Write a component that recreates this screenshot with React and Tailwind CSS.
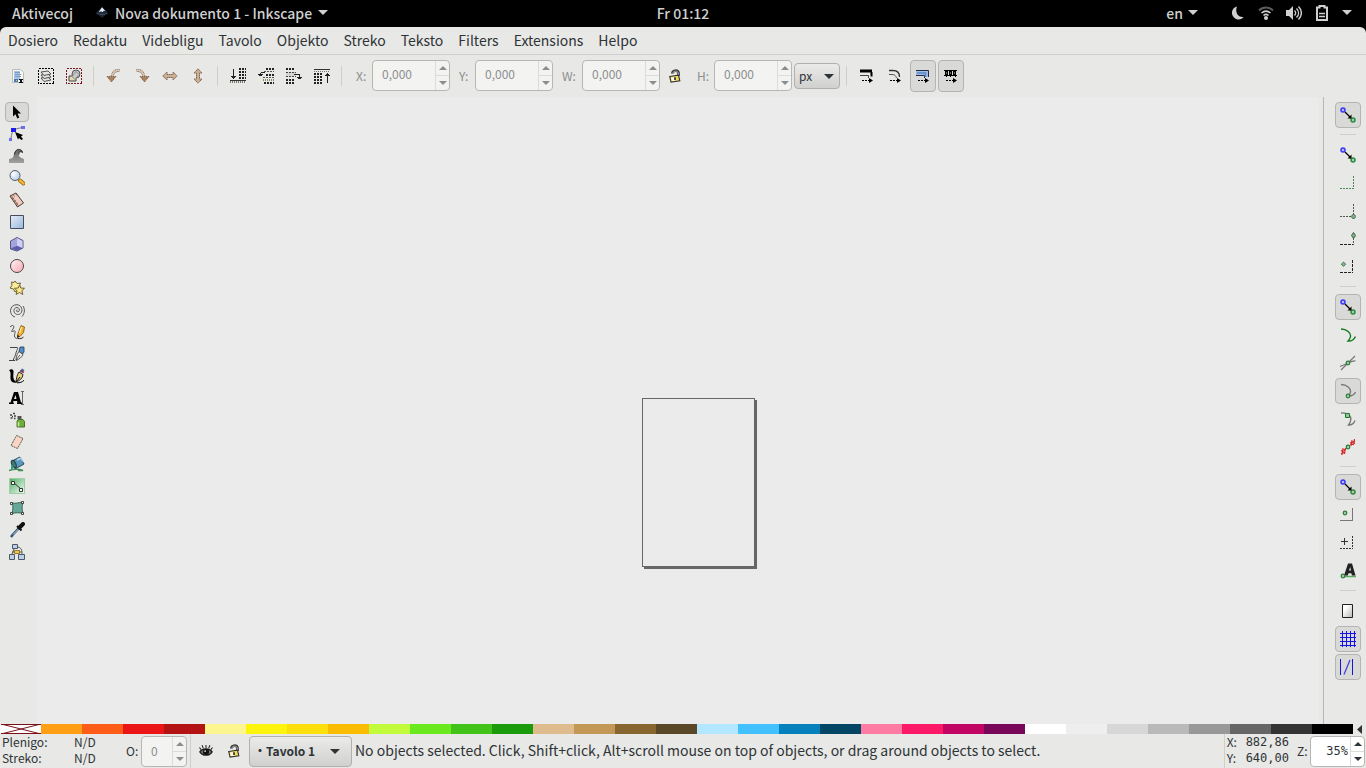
import { useState } from 'react';
import clsx from 'clsx';

const FONT = "font-['Noto_Sans_CJK_SC','Open_Sans',sans-serif]";
const MONO = "font-['DejaVu_Sans_Mono',monospace]";

const menus = ['Dosiero', 'Redaktu', 'Videbligu', 'Tavolo', 'Objekto', 'Streko', 'Teksto', 'Filters', 'Extensions', 'Helpo'];

const palette = [
  '#ff9f15', '#fe5d17', '#eb1515', '#b41313',
  '#fcf590', '#fdf40d', '#fde00b', '#fabc02',
  '#c2fb3c', '#69e91e', '#41c318', '#1b9a0b',
  '#debc8d', '#c39756', '#87672f', '#5b4829',
  '#b3e7ff', '#43c1ff', '#0480bc', '#034564',
  '#fe7ba3', '#fc1967', '#c10562', '#780659',
  '#ffffff', '#eeeeee', '#d7d7d7', '#b9b9b9', '#989898', '#666666', '#333333', '#000000',
];

function Svg({ children, ...rest }) {
  return (
    <svg width="16" height="16" viewBox="0 0 16 16" fill="none" className="shrink-0" aria-hidden="true" {...rest}>
      {children}
    </svg>
  );
}

function Caret({ up, className = 'fill-[#2e3436]', w = 10 }) {
  return (
    <svg width={w} height={w / 2} viewBox="0 0 10 5" className={clsx('shrink-0', className)} aria-hidden="true">
      <path d={up ? 'M0 5L5 0l5 5z' : 'M0 0h10L5 5z'} />
    </svg>
  );
}

/* ===== command bar icons ===== */

const selectAll = (
  <Svg>
    <path d="M2.500 1.500h8l3 3v10h-11z" fill="#f6f6f4" stroke="#bcbcb8" />
    <path d="M4 3h6v9H4z" fill="#a9c3e4" />
    <path d="M5 4.500h5M5 6.500h6M5 8.500h6" stroke="#7c9cc8" shapeRendering="crispEdges" />
    <path d="M4 11h4v3H4z" fill="#4479b4" />
    <path d="M6 12h1v1H6z" fill="#e8d060" />
    <path d="M9 11h4v1h-1v2h1v1H9v-1h1v-2H9z" fill="#111" />
  </Svg>
);
const selectLayers = (
  <Svg>
    <path d="M.5.5h15v15H.5z" stroke="#000" strokeDasharray="2 1" shapeRendering="crispEdges" />
    <g fill="#e4e4e2" stroke="#444" strokeWidth=".9">
      <path d="M3 10l7-1 3 3-7 1.500z" />
      <path d="M3 7l7-1 3 3-7 1.500z" />
      <path d="M3 4l7-1 3 3-7 1.500z" />
    </g>
  </Svg>
);
const deselect = (
  <Svg>
    <path d="M.5.5h15v15H.5z" stroke="#7d1620" strokeDasharray="2 1" shapeRendering="crispEdges" />
    <path d="M3 8h7v5H3z" fill="#dcdcb0" stroke="#444" />
    <circle cx="10" cy="6" r="4" fill="#bfc6d0" stroke="#555" />
    <path d="M10 3.500l3 3-4 5-3-3z" fill="#c9c9c9" stroke="#777" strokeWidth=".7" />
  </Svg>
);
const rotateCcw = (
  <Svg>
    <path d="M13.500 2.500C8.500 2 6.500 5 6 9" stroke="#8d7058" strokeWidth="3" strokeDasharray="1 .6" />
    <path d="M13.500 2.500C8.500 2 6.500 5 6 9" stroke="#e8d6c4" strokeWidth="1" />
    <path d="M1 8.500h9L5.500 14z" fill="#a9825f" stroke="#7d5a3e" strokeWidth=".8" strokeDasharray="1.500 .5" />
  </Svg>
);
const rotateCw = (
  <Svg>
    <path d="M2.500 2.500C7.500 2 9.500 5 10 9" stroke="#8d7058" strokeWidth="3" strokeDasharray="1 .6" />
    <path d="M2.500 2.500C7.500 2 9.500 5 10 9" stroke="#e8d6c4" strokeWidth="1" />
    <path d="M15 8.500H6L10.500 14z" fill="#a9825f" stroke="#7d5a3e" strokeWidth=".8" strokeDasharray="1.500 .5" />
  </Svg>
);
const flipH = (
  <Svg>
    <path d="M.8 8L5 4v2.500h6V4l4.200 4L11 12V9.500H5V12z" fill="#cbb096" stroke="#7d6450" strokeDasharray="1.500 .5" />
  </Svg>
);
const flipV = (
  <Svg>
    <path d="M8 .8L12 5H9.500v6H12l-4 4.200L4 11h2.500V5H4z" fill="#cbb096" stroke="#7d6450" strokeDasharray="1.500 .5" />
  </Svg>
);
const lowerBottom = (
  <Svg shapeRendering="crispEdges">
    <path d="M3.500 1v9" stroke="#222" />
    <path d="M1 8h5v1H5v1H4v1H3v-1H2V9H1z" fill="#222" />
    <path d="M9 1h7M9 4h7M9 7h7M9 10h7" stroke="#222" strokeWidth="2" strokeDasharray="2 1" />
    <path d="M0 14h16" stroke="#77776a" strokeWidth="2" strokeDasharray="1 1" />
    <path d="M0 12.500h16" stroke="#333" />
  </Svg>
);
const lower = (
  <Svg shapeRendering="crispEdges">
    <path d="M8 1h8M8 7h8M6 15h10" stroke="#222" strokeWidth="2" strokeDasharray="2 1" />
    <path d="M6 3.500h10M5 9.500h11" stroke="#555" strokeDasharray="2 1" />
    <path d="M5 12h11" stroke="#888866" strokeWidth="2" strokeDasharray="1 1" />
    <path d="M3 4.500h4M2.500 5v3" stroke="#222" />
    <path d="M0 6h5v1H4v1H1V7H0z" fill="#222" />
  </Svg>
);
const raise = (
  <Svg shapeRendering="crispEdges">
    <path d="M0 1h9M0 12h8M0 15h9" stroke="#222" strokeWidth="2" strokeDasharray="2 1" />
    <path d="M0 4h10v4H0z" fill="#d4d4d0" />
    <path d="M0 4.500h10M0 8.500h10" stroke="#444" strokeDasharray="2 1" />
    <path d="M8 6.500h6M13.500 7v3" stroke="#222" />
    <path d="M11 9h5v1h-1v1h-3v-1h-1z" fill="#222" />
  </Svg>
);
const raiseTop = (
  <Svg shapeRendering="crispEdges">
    <path d="M0 1.500h16" stroke="#333" />
    <path d="M0 3.500h16" stroke="#77776a" strokeDasharray="1 1" />
    <path d="M0 6h8M0 9h8M0 12h8M0 15h8" stroke="#222" strokeWidth="2" strokeDasharray="2 1" />
    <path d="M13.500 6v9" stroke="#222" />
    <path d="M11 8V7h1V6h1V5h1v1h1v1h1v1z" fill="#222" />
  </Svg>
);

const dottedArrow = (
  <>
    <path d="M3 12.500h7" stroke="#000" strokeDasharray="2 1" shapeRendering="crispEdges" />
    <path d="M10 10l4 2.500-4 2.500z" fill="#000" />
  </>
);
const scaleStroke = (
  <Svg>
    <path d="M1 3h12" stroke="#000" strokeWidth="3" />
    <path d="M12.500 4v4.500" stroke="#000" strokeWidth="2" />
    <path d="M1 7.500h8.500V10" stroke="#444" />
    {dottedArrow}
  </Svg>
);
const scaleCorners = (
  <Svg>
    <path d="M2 2.500h4c4 0 6.500 2.500 6.500 6.500" stroke="#333" strokeWidth="1.300" />
    <path d="M2 6.500h3c3 0 4 1.500 4.500 3.500" stroke="#555" />
    {dottedArrow}
  </Svg>
);
const scaleGradient = (
  <Svg>
    <path d="M1 2.500h12.500V9h-4V7.500H1z" fill="#9dbce6" />
    <path d="M1 2.500h12.500V9M1 7.500h8.500V10" stroke="#1d2c44" />
    <path d="M2 5h8.500v4" stroke="#5c86c4" strokeWidth="1.500" />
    {dottedArrow}
  </Svg>
);
const scalePattern = (
  <Svg>
    <path d="M1 2.500h13M1 7.500h13" stroke="#000" />
    <path d="M2 5h12" stroke="#000" strokeWidth="4" strokeDasharray="3 1" />
    <path d="M3 5h11" stroke="#ddd" strokeDasharray="1 3" />
    <path d="M3.500 8v1M7.500 8v1M12.500 8v1" stroke="#000" />
    {dottedArrow}
  </Svg>
);

const commandGroups = [
  [['Select all', selectAll], ['Select all in all layers', selectLayers], ['Deselect', deselect]],
  [['Rotate left', rotateCcw], ['Rotate right', rotateCw], ['Flip horizontally', flipH], ['Flip vertically', flipV]],
  [['Lower to bottom', lowerBottom], ['Lower', lower], ['Raise', raise], ['Raise to top', raiseTop]],
];

/* ===== toolbox ===== */

const tools = [
  ['Selector', <Svg><path d="M4 1.500v11l2.500-2.300 1.800 4.300 2-.9-1.800-4.100H12z" fill="#000" /></Svg>],
  ['Node', (
    <Svg>
      <path d="M2 13C2.500 8 3 5 6 3.500S12 2 14 1.500" stroke="#777" />
      <path d="M2 2h5v4H2z" fill="#1e1ee6" />
      <path d="M12 0h4v3h-4zM0 12h3v3H0z" fill="#6a6af2" />
      <path d="M6 6l8 3-2 1.500 2 2.500-1.500 1-2.500-2-1 1.500z" fill="#000" />
    </Svg>
  )],
  ['Tweak', (
    <Svg>
      <defs><linearGradient id="tw" x1="0" y1="0" x2="0" y2="1"><stop stopColor="#666" /><stop offset="1" stopColor="#a2a2a2" /></linearGradient></defs>
      <path d="M0 15v-4c4-.5 4.500-2 5-5C5.500 3 8 1 10.500 1.500c2 .5 3 1.500 3 3-1-.8-2-1-2.800-.6-1.700.8-1.200 4.600.8 5.600 1 .8 3.500 1 3.500 2V15z" fill="url(#tw)" />
      <path d="M5.500 6.500C6 3 8 1 10.500 1.500c2 .5 3 1.500 3 3-1-.8-2-1-2.800-.6-.8.4-1 1.400-.8 2.600" stroke="#222" />
    </Svg>
  )],
  ['Zoom', (
    <Svg>
      <defs><radialGradient id="zm" cx=".35" cy=".35" r=".7"><stop stopColor="#fff" /><stop offset="1" stopColor="#b4cdec" /></radialGradient></defs>
      <path d="M11 10.500l3.500 3" stroke="#8a5d10" strokeWidth="4" strokeLinecap="round" />
      <path d="M11 10.500l3.500 3" stroke="#f5b432" strokeWidth="2.500" strokeLinecap="round" />
      <circle cx="6" cy="5.500" r="5" fill="url(#zm)" stroke="#555c66" />
    </Svg>
  )],
  ['Measure', (
    <Svg>
      <path d="M1 4l6-3 7.500 10-6 4z" fill="#f1cdbf" stroke="#4d3a35" />
      <path d="M2.500 4l7 10M3 7l2-1M5 9.500l2-1M7 12l2-1M4.500 3l1 1.500M7 2l1 1.500" stroke="#7a5a50" strokeWidth=".8" />
    </Svg>
  )],
  ['Rectangle', (
    <Svg>
      <defs><linearGradient id="rc" x1="0" y1="0" x2="1" y2="1"><stop stopColor="#e6eefa" /><stop offset="1" stopColor="#98b6dc" /></linearGradient></defs>
      <path d="M1.500 1.500h13v13h-13z" fill="url(#rc)" stroke="#454f5c" />
    </Svg>
  )],
  ['3D box', (
    <Svg>
      <path d="M1.500 5L8 1.500l6 3v7.500l-6 3-6.500-2z" fill="#8c8cd0" stroke="#55557e" />
      <path d="M8 2v8l5.500 2V5z" fill="#d0d0f6" />
      <path d="M2 12.300l6-2.600 5.500 2.500L8 14.500z" fill="#5c5cae" />
      <path d="M2 5.300L8 2v7.700L2 12z" fill="#a4a4dc" />
    </Svg>
  )],
  ['Ellipse', (
    <Svg>
      <defs><linearGradient id="el" x1="0" y1="0" x2="1" y2="1"><stop stopColor="#fff2f3" /><stop offset="1" stopColor="#fba9b6" /></linearGradient></defs>
      <circle cx="8" cy="8" r="6.500" fill="url(#el)" stroke="#4e4446" />
    </Svg>
  )],
  ['Star', (
    <Svg>
      <path d="M6 1l2 2.500 3.500-.5-1 3 2 3-4 1L6 12 4.500 9 1 8l2-2.500-.5-3.500 2.500.500z" fill="#f9eca0" stroke="#6f6430" />
      <path d="M10.500 5l1.300 3 3.700.3-2.600 2.400.9 3.800-3.300-2-3.400 2 .9-3.800L5.500 8.300l3.700-.3z" fill="#fbe88a" stroke="#6f6430" />
    </Svg>
  )],
  ['Spiral', (
    <Svg>
      <path d="M8.500 8C7 7.500 7 10 8.800 9.800c2.500-.3 2-4.300-.8-4.300-4 0-4.300 6.500.5 7 6 .5 6-9.500-.5-9.800C0 2.500-.5 13.500 6 15M14 4c2 3 2 7-1 10.500" stroke="#555" />
    </Svg>
  )],
  ['Pencil', (
    <Svg>
      <path d="M1 3c3-3 5-1 3 2s-2 3 1 2-1 5 1 6.500 2 1 3 1" stroke="#555" />
      <path d="M12 1.500L15.500 3l-1 5.500-3.500 4-2.500 1 .5-4z" fill="#f6b32c" stroke="#7a5110" strokeWidth=".8" />
      <path d="M8.500 10.500l2 2-2.500 1.500z" fill="#222" />
      <path d="M12.500 3l-2 6" stroke="#fde7a8" strokeWidth="1.200" />
      <path d="M9 14.500c2 .5 4 0 5.500-1.500" stroke="#222" />
    </Svg>
  )],
  ['Bezier', (
    <Svg>
      <path d="M1 1.500h7c2 0-1 4-1.500 7S4 12.500 4.500 14M0 14.500h6" stroke="#444" />
      <path d="M11 1h4v5l-1.500 2L10 6z" fill="#4a90cc" stroke="#26384a" strokeWidth=".8" />
      <path d="M10 5.500l4 3c-1.500 3-3.500 4.500-7 6C7 11 8 8 10 5.500z" fill="#ededea" stroke="#333" strokeWidth=".8" />
      <path d="M7 14l4-5" stroke="#333" strokeWidth=".8" />
    </Svg>
  )],
  ['Calligraphy', (
    <Svg>
      <path d="M0 2c3-1.500 5-1 4.500 3S4 12 8 14.500C3 15.500 1 13 1.500 8 1.800 5 1.500 3.500 0 2z" fill="#000" />
      <path d="M13 .5l2.500 1.500-2 3-3-1.500z" fill="#3f6fb0" />
      <path d="M11.500 2.500l3.500 2" stroke="#b02020" strokeWidth="1.300" />
      <path d="M10 4l4 2.500c-.5 4-3 6-7 7.500.5-4 1-7 3-10z" fill="#e9d27c" stroke="#222" />
      <path d="M7 14l4-5M8 14.800c3 0 5-.5 7-2.500" stroke="#000" />
    </Svg>
  )],
  ['Text', (
    <Svg>
      <path d="M0 12.500h1.500L5 2h4l3 10.500h1V14H8v-1.500h.5L8 11H4.500L4 12.500h.8V14H0zM5 9h2.500L6.500 5z" fill="#000" fillRule="evenodd" />
      <path d="M12 1.500h3M12 14.500h3M13.500 2v12" stroke="#666" />
    </Svg>
  )],
  ['Spray', (
    <Svg>
      <path d="M9 7.500h5l1.500 2V15H8V9.500z" fill="#6cae36" stroke="#35561c" strokeWidth=".8" />
      <path d="M9.500 10v4.500" stroke="#c8ec9a" strokeWidth="1.500" />
      <path d="M8.500 4h4v3h-4z" fill="#555" />
      <path d="M1 3h2M4 1.500h2M5 4h2M1.500 6h2M5 6.500h1.500M3 4.500h1" stroke="#444" strokeWidth="1.300" />
    </Svg>
  )],
  ['Eraser', (
    <Svg>
      <path d="M7.500 1.500l6.500 3-5.500 10-6.500-3z" fill="#fad5c7" stroke="#554" strokeWidth=".9" strokeDasharray="2 .6" />
    </Svg>
  )],
  ['Bucket', (
    <Svg>
      <path d="M0 14.500c4-1.500 10-1.500 14 0H9" stroke="#3e8f50" strokeWidth="1.500" />
      <path d="M3 5l8-4 4 7-8 4.500C4 12 2.500 8 3 5z" fill="#5b9ac0" stroke="#27455a" />
      <ellipse cx="4.800" cy="8" rx="2" ry="4" transform="rotate(-25 4.800 8)" fill="#3c7a70" stroke="#223b44" />
      <path d="M8 4l4-2 2 3.500" stroke="#b7d8ea" strokeWidth="1.500" />
      <path d="M3 9v5" stroke="#3a9a80" strokeWidth="2" />
    </Svg>
  )],
  ['Gradient', (
    <Svg>
      <defs><linearGradient id="gd" x1="0" y1="0" x2="1" y2="1"><stop stopColor="#4fae62" /><stop offset="1" stopColor="#f4fcf5" /></linearGradient></defs>
      <path d="M.5.500h15v15H.5z" fill="url(#gd)" stroke="#9ccfa6" />
      <path d="M5 5l7 6" stroke="#333" />
      <path d="M2.500 3.500h3v3h-3zM10.500 10.500h3v3h-3z" fill="#fff" stroke="#333" />
    </Svg>
  )],
  ['Mesh', (
    <Svg>
      <path d="M3 3c4 1 7-1 11-.5-1.500 4-1 7 0 11-4-1-7-1-11 0 1-4 1.500-7 0-10.500z" fill="#67a79a" stroke="#37645c" />
      <path d="M1.500 2.500h2v2h-2zM12.500 1.500h2v2h-2zM1.500 12.500h2v2h-2zM12.500 12.500h2v2h-2z" fill="#fff" stroke="#333" strokeWidth=".9" />
    </Svg>
  )],
  ['Dropper', (
    <Svg>
      <path d="M10.500 5.500L3.500 13l-1.500 2" stroke="#31536e" strokeWidth="2.500" />
      <path d="M10 6.500L4 12.500" stroke="#b8d4ea" />
      <path d="M8 4l4.500 4.500" stroke="#111" strokeWidth="2" />
      <path d="M10.500 5.500L14 2" stroke="#111" strokeWidth="4" strokeLinecap="round" />
    </Svg>
  )],
  ['Connector', (
    <Svg>
      <path d="M5 5L3 10M9 3c4 1 4 4 4 7M3 8h10" stroke="#555" />
      <path d="M3.500.500h5v4h-5zM.5 10.500h5v5h-5zM9.500 10.500h6v5h-6z" fill="#bcd0ea" stroke="#4e5864" />
      <path d="M5.500 6.500h5v3h-5z" fill="#f6c44a" stroke="#7a6420" strokeWidth=".8" />
    </Svg>
  )],
];

/* ===== snap bar ===== */

const snapIcon = (
  <Svg>
    <circle cx="3" cy="3" r="2" fill="#b4b4f8" stroke="#3a3af0" strokeWidth="1.500" />
    <circle cx="13" cy="13" r="2" fill="#a9c8c0" stroke="#2f8a3a" strokeWidth="1.500" />
    <path d="M5 5l5 5" stroke="#000" strokeWidth="1.200" />
    <path d="M11.500 7.500v4h-4z" fill="#000" />
  </Svg>
);
const greenDot = (cx, cy) => <circle cx={cx} cy={cy} r="1.800" fill="#9ccfa4" stroke="#2f7a3a" strokeWidth="1.200" />;

const snapGroups = [
  [['Enable snapping', snapIcon, true]],
  [
    ['Snap bounding boxes', snapIcon],
    ['Snap to box edges', <Svg><path d="M0 13.500h14M13.500 1v13" stroke="#4c8a54" strokeDasharray="2 1" shapeRendering="crispEdges" /></Svg>],
    ['Snap box corners', <Svg><path d="M0 13.500h11M13.500 1v10" stroke="#555" strokeDasharray="2 1" shapeRendering="crispEdges" /><path d="M13.500 11l2.500 2.500-2.500 2.500-2.500-2.500z" fill="#7fb488" stroke="#3c5c40" /></Svg>],
    ['Snap edge midpoints', <Svg><path d="M0 13.500h14" stroke="#222" strokeDasharray="3 1" shapeRendering="crispEdges" /><path d="M13.500 7v7" stroke="#555" strokeDasharray="2 1" /><path d="M13.500 1.500l2 3-2 3-2-3z" fill="#7fb488" stroke="#3c5c40" /></Svg>],
    ['Snap box centers', <Svg><path d="M0 13.500h13M12.500 1v13" stroke="#222" strokeDasharray="3 1" shapeRendering="crispEdges" /><path d="M3.500 3l2.200 2.200-2.200 2.200-2.200-2.200z" fill="#7fb488" stroke="#4a7a50" /></Svg>],
  ],
  [
    ['Snap nodes', snapIcon, true],
    ['Snap to paths', <Svg><path d="M1 2c6 0 10 4 9.500 7.500-.3 2-1.500 3.500-2.500 4.500 4 .500 6-1.500 7.500-4.500" stroke="#0d7a1c" strokeWidth="1.400" /></Svg>],
    ['Snap path intersections', <Svg><path d="M1 15L15 1M0 11.500C5 10 11 5.500 15.500 6" stroke="#777" strokeWidth="1.200" />{greenDot(8, 8)}</Svg>],
    ['Snap cusp nodes', <Svg><path d="M1 1.500c6 0 10 4 9.500 7.500-.3 1.500-1 3-2 4 4 0 6-1.500 7-4" stroke="#777" strokeWidth="1.300" />{greenDot(8, 13)}</Svg>, true],
    ['Snap smooth nodes', <Svg><path d="M1 2c8-.5 11 4 9.500 8-.4 1.500-1.200 3-2 4 4 0 5.500-1.500 6.500-4.500" stroke="#777" strokeWidth="1.300" /><path d="M5.500 2.500h4v4h-4z" fill="#8cc896" stroke="#1d7a2c" /></Svg>],
    ['Snap line midpoints', <Svg><path d="M1 15L15 1" stroke="#888" /><path d="M1 12l5-2M1 15l4-2M3 9l-1 7M5.500 9l-1 6M10 4l5-2M11 6l4-2M12 1l-1 6M14.500 0l-1 6" stroke="#d22" strokeWidth="1.100" />{greenDot(8, 8)}</Svg>],
  ],
  [
    ['Snap other points', snapIcon, true],
    ['Snap object centers', <Svg><path d="M0 13.500h13M12.500 1v13" stroke="#777" shapeRendering="crispEdges" />{greenDot(5, 6)}</Svg>],
    ['Snap rotation centers', <Svg><path d="M0 13.500h13M12.500 1v13" stroke="#333" strokeDasharray="2 1" shapeRendering="crispEdges" /><path d="M4.500 3v7M1 6.500h7" stroke="#333" shapeRendering="crispEdges" /></Svg>],
    ['Snap text baselines', (
      <Svg>
        <path d="M3 13.500h13" stroke="#5aa864" strokeWidth="1.500" />
        <path d="M4 12.500L8 .500h4l3.500 12H12l-.7-2.300H8.500l-.7 2.300zM9 7.500h2L10.200 4z" fill="#222" fillRule="evenodd" />
        {greenDot(3, 13)}
      </Svg>
    )],
  ],
  [
    ['Snap page border', (
      <Svg>
        <defs><linearGradient id="pg" x1="0" y1="0" x2="1" y2="1"><stop offset=".3" stopColor="#fff" /><stop offset="1" stopColor="#b4b4b4" /></linearGradient></defs>
        <path d="M2.500 1.500h10v13h-10z" fill="url(#pg)" stroke="#222" />
      </Svg>
    )],
    ['Snap to grids', <Svg><path d="M2.500 0v16M6.500 0v16M10.500 0v16M14.500 0v16M0 2.500h16M0 6.500h16M0 10.500h16M0 14.500h16" stroke="#1414e0" shapeRendering="crispEdges" /></Svg>, true],
    ['Snap guides', <Svg><path d="M.5 0v16M12.500 0v16" stroke="#1414e0" shapeRendering="crispEdges" /><path d="M4 15.500L10 1" stroke="#3a3ae0" strokeWidth="1.200" /></Svg>, true],
  ],
];

const lockIcon = (
  <Svg width="14" height="14">
    <path d="M5 5C5 1.500 11 .5 12 4.500V8" stroke="#333" strokeWidth="3" />
    <path d="M5.500 4.500C6 2 11 1.500 11.800 4.500V8" stroke="#ccc" strokeWidth="1" />
    <path d="M2 8.500l10-1.500 1.500 6.500-10 1.500z" fill="#f4dc5c" stroke="#333" strokeWidth="1.300" />
    <path d="M3.500 10l4.500-.6.8 3.600-4.500.6z" fill="#fffbe8" />
    <path d="M7 9.500h2v3H7z" fill="#333" />
  </Svg>
);

function IconButton({ label, pressed, disabled, className = 'w-[26px] h-[26px]', children, onClick }) {
  return (
    <button
      type="button"
      aria-label={label}
      aria-pressed={pressed}
      disabled={disabled}
      onClick={onClick}
      className={clsx(
        'flex shrink-0 items-center justify-center rounded border',
        pressed ? 'border-[#b4b4b1] bg-[#d9d9d7]' : 'border-transparent',
        className,
      )}
    >
      {children}
    </button>
  );
}

function Spin({ id, value, disabled, className, inputClass }) {
  const arrow = disabled ? 'fill-[#8b8e8f]' : 'fill-[#2e3436]';
  return (
    <div className={clsx('flex h-[31px] shrink-0 overflow-hidden rounded border border-[#b6b6b2]', disabled ? 'bg-[#f3f3f2]' : 'bg-white', className)}>
      <input
        id={id}
        defaultValue={value}
        disabled={disabled}
        className={clsx('min-w-0 flex-1 bg-transparent outline-none', disabled ? 'text-[#8b8e8f]' : 'text-[#2e3436]', inputClass)}
      />
      <div className="flex w-[14px] shrink-0 flex-col border-l border-[#dcdcda]">
        <button type="button" aria-label="Increase" disabled={disabled} className="flex flex-1 items-center justify-center border-b border-[#dcdcda]">
          <Caret up w={8} className={arrow} />
        </button>
        <button type="button" aria-label="Decrease" disabled={disabled} className="flex flex-1 items-center justify-center">
          <Caret w={8} className={arrow} />
        </button>
      </div>
    </div>
  );
}

function Select({ label, options, className, selectClass, caretClass }) {
  return (
    <div className={clsx('relative shrink-0', className)}>
      <select
        aria-label={label}
        className={clsx('h-full w-full appearance-none rounded border border-[#b0b0ad] bg-linear-to-b from-[#ebebe9] to-[#d0d0ce] text-[#2e3436] outline-none', selectClass)}
      >
        {options.map(o => <option key={o}>{o}</option>)}
      </select>
      <div className={clsx('pointer-events-none absolute inset-y-0 right-0 flex items-center', caretClass)}>
        <Caret />
      </div>
    </div>
  );
}

function Divider({ vertical }) {
  return vertical
    ? <div className="h-5 w-[10px] shrink-0 pl-1"><div className="h-full w-px bg-[#cfcfcc]" /></div>
    : <div className="h-[10px] w-4 shrink-0 pt-1"><div className="h-px w-full bg-[#cfcfcc]" /></div>;
}

function TopPanel() {
  return (
    <header className="grid h-[27px] shrink-0 grid-cols-[1fr_auto_1fr] items-center bg-black pb-0.5 text-[14px] leading-5 font-medium text-[#d0d0d0]">
      <div className="flex items-center">
        <button type="button" className="pl-3">Aktivecoj</button>
        <button type="button" className="flex items-center pl-[22px]">
          <Svg width="14" height="14">
            <path d="M8 1l6.500 6.500c1 1.200-1 1.800-3 2 1 1-1 2.500-3.500 4-2-1.500-4-2.500-3-4-2-.2-4.500-1-3.500-2z" fill="#1c2634" />
            <path d="M8 1.500l4 4.500-2-.5-1.500 1.500L7 6 4 7z" fill="#e4edf6" />
            <path d="M2 8.500c4 1.500 8 1.500 12 0" stroke="#41566f" />
          </Svg>
          <span className="px-1.5">Nova dokumento 1 - Inkscape</span>
          <Caret className="fill-[#d0d0d0]" />
        </button>
      </div>
      <button type="button">Fr 01:12</button>
      <div className="flex items-center justify-end pr-[14px]">
        <button type="button" className="flex items-center gap-[5px] pr-8">
          en
          <Caret className="fill-[#d0d0d0]" />
        </button>
        <button type="button" aria-label="System menu" className="flex items-center gap-3">
          <Svg><path d="M7 1.500C1.500 3 .5 9 4 12.500c3 3 8 2.500 9.500-.5-5 .8-9-4.500-6.500-10.500z" fill="#d0d0d0" /></Svg>
          <Svg>
            <path d="M1 5.500c4-4 10-4 14 0" stroke="#5c5c5c" strokeWidth="2" />
            <path d="M3.500 8c3-2.500 6-2.500 9 0M5.500 10.500c1.500-1.300 3.500-1.300 5 0" stroke="#d0d0d0" strokeWidth="1.600" />
            <circle cx="8" cy="13" r="2" fill="#d0d0d0" />
          </Svg>
          <Svg>
            <path d="M0 5h3l4-4v14l-4-4H0z" fill="#d0d0d0" />
            <path d="M8.500 5.500c1.500 1.500 1.500 3.500 0 5M10.500 3.500c2.700 2.700 2.700 6.300 0 9M12.500 1.500c3.800 3.800 3.800 9.200 0 13" stroke="#d0d0d0" strokeWidth="1.400" />
          </Svg>
          <Svg>
            <path d="M3 2.500h2.500V1h5v1.500H13V15H3z" stroke="#d0d0d0" strokeWidth="2" />
            <path d="M5 8.500h6M5 11.500h6" stroke="#d0d0d0" strokeWidth="1.500" />
          </Svg>
          <Caret className="fill-[#d0d0d0]" />
        </button>
      </div>
    </header>
  );
}

export default function App() {
  const [tool, setTool] = useState('Selector');

  return (
    <div className={clsx('flex h-screen flex-col overflow-hidden bg-black text-[#2e3436]', FONT)}>
      <TopPanel />

      <div className="flex min-h-0 flex-1 flex-col overflow-hidden rounded-t-md bg-[#e8e8e6]">
        <nav className="flex h-7 shrink-0 items-center gap-px border-b border-[#cfcfcc] pb-px pl-px text-[14px] leading-5">
          {menus.map(m => <button key={m} type="button" className="px-[7px]">{m}</button>)}
        </nav>

        {/* Command bar */}
        <div className="flex h-[42px] shrink-0 items-center pl-[5px] text-[12px]">
          {commandGroups.map((group, i) => (
            <div key={i} className="flex items-center gap-0.5 pr-0.5">
              {group.map(([label, icon]) => <IconButton key={label} label={label}>{icon}</IconButton>)}
              <Divider vertical />
            </div>
          ))}
          <label htmlFor="pos-x" className="ml-[7px] w-4 text-[#8b8e8f]">X:</label>
          <Spin id="pos-x" value="0,000" disabled className="mb-px w-[78px]" inputClass="pb-1 pl-[9px]" />
          <label htmlFor="pos-y" className="ml-[9px] w-4 text-[#8b8e8f]">Y:</label>
          <Spin id="pos-y" value="0,000" disabled className="mb-px w-[78px]" inputClass="pb-1 pl-[9px]" />
          <label htmlFor="size-w" className="ml-[9px] w-5 text-[#8b8e8f]">W:</label>
          <Spin id="size-w" value="0,000" disabled className="mb-px w-[78px]" inputClass="pb-1 pl-[9px]" />
          <IconButton label="Lock ratio" className="ml-0.5 h-[26px] w-[26px]">{lockIcon}</IconButton>
          <label htmlFor="size-h" className="ml-[9px] w-[17px] text-[#8b8e8f]">H:</label>
          <Spin id="size-h" value="0,000" disabled className="mb-px w-[78px]" inputClass="pb-1 pl-[9px]" />
          <Select label="Unit" options={['px', 'mm', 'cm', 'pt']} className="mx-0.5 h-[26px] w-[46px]" selectClass="pl-1 text-[12px]" caretClass="w-4" />
          <div className="flex items-center gap-0.5">
            <Divider vertical />
            <IconButton label="Scale stroke width">{scaleStroke}</IconButton>
            <IconButton label="Scale rounded corners">{scaleCorners}</IconButton>
            <IconButton label="Move gradients" pressed className="h-8 w-[26px]">{scaleGradient}</IconButton>
            <IconButton label="Move patterns" pressed className="h-8 w-[26px]">{scalePattern}</IconButton>
          </div>
        </div>

        <div className="flex min-h-0 flex-1">
          {/* Toolbox */}
          <aside className="flex w-[37px] shrink-0 flex-col gap-0.5 pt-[5px] pl-[5px]">
            {tools.map(([label, icon]) => (
              <IconButton key={label} label={label} pressed={tool === label} onClick={() => setTool(label)} className="h-5 w-6">
                {icon}
              </IconButton>
            ))}
          </aside>

          <main className="relative mr-1 min-w-0 flex-1 overflow-hidden bg-[#ebebeb]">
            <div className="absolute top-[301px] left-[605px] h-[169px] w-[113px] border border-[#666] shadow-[2px_2px_0_#666]" />
          </main>

          {/* Snap bar */}
          <aside className="flex w-[43px] shrink-0 flex-col items-center gap-0.5 border-l border-[#b6b6b2] pt-[5px] pl-[6px]">
            {snapGroups.map((group, i) => (
              <div key={i} className="flex flex-col items-center gap-0.5">
                {i > 0 && <Divider />}
                {group.map(([label, icon, on]) => (
                  <IconButton key={label} label={label} pressed={!!on}>{icon}</IconButton>
                ))}
              </div>
            ))}
          </aside>
        </div>

        {/* Palette */}
        <div className="flex h-[10px] shrink-0">
          <button type="button" aria-label="No colour" className="min-w-0 flex-1 bg-white">
            <svg className="h-full w-full" viewBox="0 0 41 10" preserveAspectRatio="none" fill="none" aria-hidden="true">
              <path d="M1 0l40 10M41 0L1 10M1 .5h40M1 9.500h40" stroke="#7c1218" />
            </svg>
          </button>
          {palette.map(c => (
            <button key={c} type="button" aria-label={c} className="min-w-0 flex-1" style={{ backgroundColor: c }} />
          ))}
          <button type="button" aria-label="Palette menu" className="flex w-[13px] items-center justify-center">
            <svg width="5" height="9" viewBox="0 0 5 9" aria-hidden="true"><path d="M5 0v9L0 4.500z" fill="#2e3436" /></svg>
          </button>
        </div>

        {/* Status bar */}
        <footer className="flex h-[34px] shrink-0 items-center text-[12px] leading-4">
          <dl className="grid w-[126px] shrink-0 grid-cols-[72px_auto] pb-0.5 pl-0.5">
            <dt>Plenigo:</dt><dd>N/D</dd>
            <dt>Streko:</dt><dd>N/D</dd>
          </dl>
          <label htmlFor="opacity" className="w-[15px] shrink-0">O:</label>
          <Spin id="opacity" value="0" disabled className="mt-px w-[46px]" inputClass="pb-0.5 pl-[9px]" />
          <div className="ml-[3px] h-full w-px shrink-0 bg-[#cfcfcc]" />
          <IconButton label="Toggle layer visibility" className="ml-0.5 h-[26px] w-[26px]">
            <Svg width="14" height="14">
              <path d="M1 9c3-4.500 11-4.500 14 0-3 5-11 5-14 0z" fill="#777" stroke="#222" strokeWidth="1.500" />
              <circle cx="8" cy="9" r="3.500" fill="#111" />
              <circle cx="7" cy="8" r="1" fill="#eee" />
              <path d="M2.500 6.500L.5 4M5 5L3.500 1.500M8 4.500V1M11 5l1.500-3.500M13.500 6.500l2-2.500" stroke="#222" strokeWidth="1.200" />
            </Svg>
          </IconButton>
          <IconButton label="Toggle layer lock" className="mx-0.5 h-[26px] w-[26px]">{lockIcon}</IconButton>
          <Select label="Current layer" options={['•Tavolo 1']} className="mt-px h-[31px] w-[103px]" selectClass="pb-0.5 pl-1 text-[12px] font-bold" caretClass="w-[22px]" />
          <p className="min-w-0 flex-1 truncate pb-0.5 pl-[3px] text-[14px] leading-5">
            No objects selected. Click, Shift+click, Alt+scroll mouse on top of objects, or drag around objects to select.
          </p>
          <dl className="grid h-full shrink-0 grid-cols-[19px_auto] content-center border-l border-[#cfcfcc] pb-0.5 pl-0.5">
            <dt>X:</dt><dd className={MONO}>882,86</dd>
            <dt>Y:</dt><dd className={MONO}>640,00</dd>
          </dl>
          <label htmlFor="zoom" className="ml-2 w-[13px] shrink-0">Z:</label>
          <Spin id="zoom" value="35%" className="mt-px mr-px w-[55px]" inputClass={clsx('pr-0.5 pb-0.5 text-right', MONO)} />
        </footer>
      </div>
    </div>
  );
}
